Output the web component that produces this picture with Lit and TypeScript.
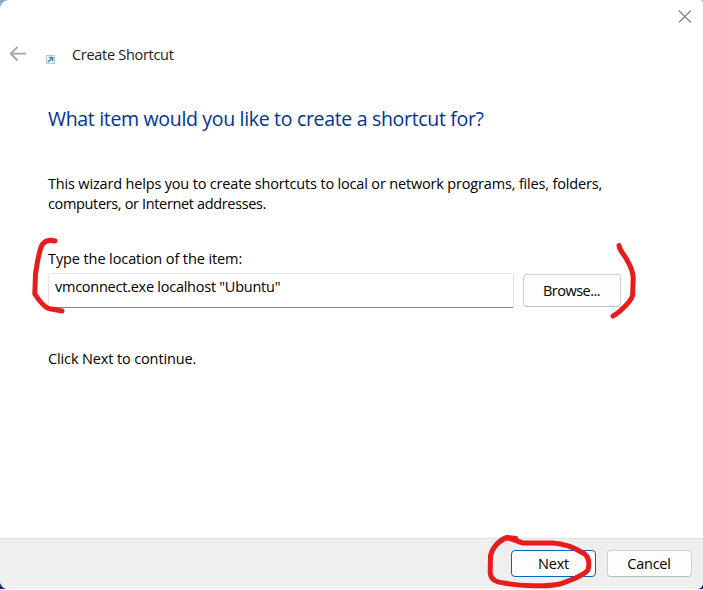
import { LitElement, html, css } from "lit";
import { customElement } from "lit/decorators.js";

@customElement("app-root")
export class AppRoot extends LitElement {
  static styles = css`
    :host {
      display: block;
      position: relative;
      width: 703px;
      height: 590px;
      overflow: hidden;
      background: #fff;
      color: #000;
      font: 14.5px/20px "Open Sans", "Noto Sans", sans-serif;
    }
    * { box-sizing: border-box; }
    .backdrop { height: 589px; background: linear-gradient(#8fa9c9 50%, #0c2a86 50%); }
    .dialog {
      display: flex;
      flex-direction: column;
      height: 589px;
      background: #fff;
      border-radius: 9px 3px 6px 8px;
      overflow: hidden;
    }
    .titlebar { display: flex; justify-content: flex-end; height: 40px; padding: 10px 12px 0 0; }
    .header { display: flex; height: 30px; padding-left: 9px; color: #1a1a1a; }
    .back { margin-top: 5px; }
    .link { margin: 15px 0 0 19px; }
    .title { margin: 5px 0 0 17px; letter-spacing: -0.3px; }
    svg { display: block; flex: none; }
    main { flex: 1; padding: 36px 0 0 48px; white-space: nowrap; }
    h1 { margin: 0; font-size: 19.5px; line-height: 26px; font-weight: 400; color: #003399; letter-spacing: -0.32px; }
    p { margin: 0; }
    .intro { margin-top: 42px; }
    .l1 { letter-spacing: -0.17px; }
    .l2 { letter-spacing: -0.35px; }
    .label { display: block; margin-top: 35px; letter-spacing: -0.1px; }
    .row { display: flex; align-items: flex-start; gap: 9px; margin-top: 4px; }
    .field {
      width: 466px;
      height: 35px;
      padding: 3px 6px;
      border: 1px solid #e5e5e5;
      border-bottom-color: #868686;
      border-radius: 2px;
      letter-spacing: -0.25px;
    }
    button {
      display: flex;
      align-items: center;
      justify-content: center;
      width: 85px;
      height: 27px;
      padding: 0 1px 0 0;
      border: 1px solid #d0d0d0;
      border-bottom-color: #bcbcbc;
      border-radius: 4px;
      background: #fdfdfd;
      color: #000;
      font: inherit;
      letter-spacing: -0.25px;
    }
    .browse { width: 98px; height: 33px; margin-top: 1px; letter-spacing: -0.5px; }
    .next { padding: 0; border-color: #0067c0; }
    .hint { margin-top: 41px; letter-spacing: -0.13px; }
    footer {
      display: flex;
      justify-content: flex-end;
      gap: 11px;
      height: 51px;
      padding: 11px 11px 0 0;
      background: #efefef;
      border-top: 1px solid #dfdfdf;
    }
    .ink { position: absolute; inset: 0; pointer-events: none; }
  `;

  render() {
    return html`
      <div class="backdrop">
        <div class="dialog">
          <div class="titlebar">
            <svg width="13" height="13" viewBox="0 0 13 13" fill="none" stroke="#858585" stroke-width="1.2">
              <path d="M.8 .5 12.8 12.5M12.8 .5 .8 12.5" />
            </svg>
          </div>
          <div class="header">
            <svg class="back" width="18" height="18" viewBox="0 0 18 18" fill="none" stroke="#a4a4a4" stroke-width="1.8">
              <path d="M17 8.700H1.800M8.500 2 1.800 8.700 8.500 15.500" />
            </svg>
            <svg class="link" width="9" height="9" viewBox="0 0 9 9" fill="none">
              <rect x=".5" y=".5" width="8" height="8" fill="#f8fafc" stroke="#bdc4ca" />
              <path d="M2 7 6.300 2.700M2.800 2.400H6.600V6.200" stroke="#1683d8" stroke-width="1.300" />
            </svg>
            <div class="title">Create Shortcut</div>
          </div>
          <main>
            <h1>What item would you like to create a shortcut for?</h1>
            <p class="intro">
              <span class="l1">This wizard helps you to create shortcuts to local or network programs, files, folders,</span><br />
              <span class="l2">computers, or Internet addresses.</span>
            </p>
            <span class="label">Type the location of the item:</span>
            <div class="row">
              <div class="field">vmconnect.exe localhost "Ubuntu"</div>
              <button class="browse">Browse...</button>
            </div>
            <p class="hint">Click Next to continue.</p>
          </main>
          <footer>
            <button class="next">Next</button>
            <button>Cancel</button>
          </footer>
        </div>
      </div>
      <svg class="ink" width="703" height="590" viewBox="0 0 703 590" fill="none" stroke="#e81c1c" stroke-width="5" stroke-linecap="round" stroke-linejoin="round">
        <path d="M55 241C49 239.500 44 241 41.500 246C38 255 37 265 35.500 274L34.800 294C38 299 43 306 48.500 308.500L62 311" />
        <path d="M619 245.500C620 252 625 255 627.500 261C631 267 633 272 633.200 278L632.700 295C631 302 625 306 620 311C618 313 616 314 613 316" />
        <path d="M516 538.500L507 537.500C499 540 492 548 490.500 556L490.200 573C491 580 496 582 504 583C520 586 545 587 560 584C571 580 583 576 588 570C590 562 589 557 584 553.500C575 548 564 543.500 553 543L523 543C518 542 514 539 507 538" />
      </svg>
    `;
  }
}
